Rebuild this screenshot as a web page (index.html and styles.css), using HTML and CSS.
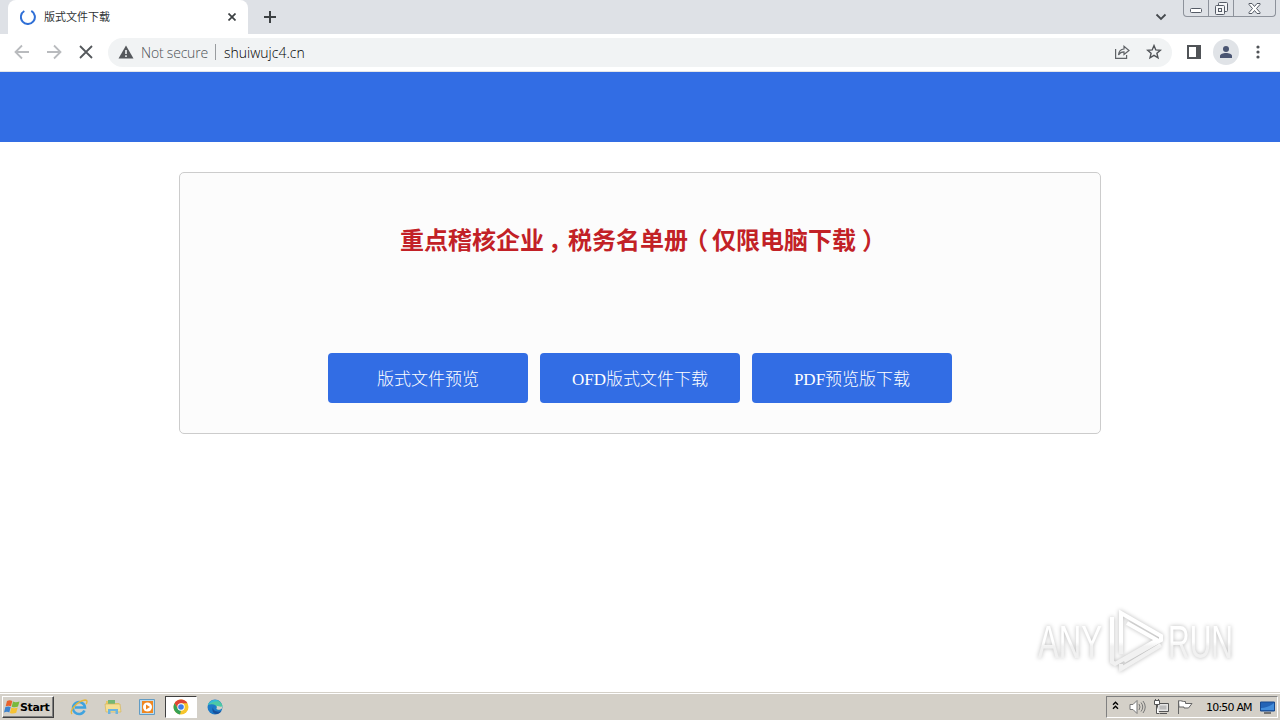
FILE: index.html
```html
<!DOCTYPE html>
<html lang="zh-CN">

<head>
    <meta charset="UTF-8">
    <meta name="viewport" content="width=device-width, initial-scale=1.0">
    <title>版式文件下载</title>
    <link rel="stylesheet" href="styles.css">
</head>

<body>
    <!-- Tabs -->
    <div class="tab-strip">
        <div class="tab">
            <svg class="spinner" width="16" height="16" viewBox="0 0 16 16"><path d="M11.3 1.9A7 7 0 1 1 4.3 2" fill="none" stroke="#2f6fd6" stroke-width="2"/></svg>
            <span class="tab-title">版式文件下载</span>
            <svg class="tab-close" width="8" height="8" viewBox="0 0 8 8"><path d="M.5 .5l7 7M7.5 .5l-7 7" stroke="#3c4043" stroke-width="1.7"/></svg>
        </div>
        <svg class="new-tab" width="12" height="12" viewBox="0 0 12 12"><path d="M6 0v12M0 6h12" stroke="#3c4043" stroke-width="2"/></svg>
        <svg class="tab-search" width="12" height="8" viewBox="0 0 12 8"><path d="M1.5 1.5L6 6l4.500-4.500" fill="none" stroke="#45494e" stroke-width="1.8"/></svg>
        <div class="window-buttons">
            <span class="win-btn win-min"><svg width="12" height="5" viewBox="0 0 12 5"><rect x=".5" y=".5" width="11" height="4" rx="1" fill="#fff" stroke="#555b66"/></svg></span>
            <span class="win-btn win-max"><svg width="13" height="13" viewBox="0 0 13 13"><g fill="#f4f5f7" stroke="#555b66"><rect x="3.500" y=".5" width="9" height="9" rx="1"/><rect x=".5" y="3.500" width="9" height="9" rx="1"/><rect x="3.500" y="6.500" width="3" height="3"/></g></svg></span>
            <span class="win-btn win-close"><svg width="13" height="11" viewBox="0 0 13 11"><path d="M1 .5h3l2.500 3 2.500-3h3v1L8.500 5.500l3.500 4v1H9l-2.500-3-2.500 3H1v-1l3.500-4L1 1.500z" fill="#fff" stroke="#555b66"/></svg></span>
        </div>
    </div>

    <!-- Toolbar -->
    <div class="toolbar">
        <svg class="nav-icon" width="16" height="16" viewBox="0 0 16 16"><path d="M15 8H2M8 1.500L1.500 8 8 14.500" fill="none" stroke="#b9bbbe" stroke-width="1.800"/></svg>
        <svg class="nav-icon" width="16" height="16" viewBox="0 0 16 16"><path d="M1 8h13M8 1.500L14.500 8 8 14.500" fill="none" stroke="#b9bbbe" stroke-width="1.800"/></svg>
        <svg class="nav-icon" width="16" height="16" viewBox="0 0 16 16"><path d="M2 2l12 12M14 2L2 14" stroke="#55585c" stroke-width="1.800"/></svg>
        <div class="address-bar">
            <svg width="16" height="14" viewBox="0 0 16 14"><path d="M8 .5L15.500 13.500H.5z" fill="#55585c"/><path d="M8 5v4M8 10.300v1.700" stroke="#f1f3f4" stroke-width="1.600"/></svg>
            <span class="not-secure">Not secure</span>
            <span class="separator"></span>
            <span class="url">shuiwujc4.cn</span>
            <svg class="share" width="16" height="16" viewBox="0 0 16 16"><g fill="none" stroke="#606367" stroke-width="1.200"><path d="M1.600 5v9.400h11V11"/><path d="M4.500 11c.4-4 2.500-5.800 5.500-6V2.200L15 6.500l-5 4V7.900c-2.500 0-4.200.9-5.500 3.100z"/></g></svg>
            <svg class="star" width="16" height="16" viewBox="0 0 16 16"><path d="M8 1.600l1.800 4.300 4.600.4-3.500 3 1.100 4.500L8 11.400l-4 2.400 1.100-4.500-3.500-3 4.600-.4z" fill="none" stroke="#505357" stroke-width="1.400"/></svg>
        </div>
        <svg class="side-panel" width="14" height="14" viewBox="0 0 14 14"><rect x="1" y="1" width="12" height="12" fill="none" stroke="#505357" stroke-width="2"/><path d="M9 1h4v12H9z" fill="#505357"/></svg>
        <span class="avatar"><svg width="12" height="12" viewBox="0 0 12 12"><circle cx="6" cy="3" r="3" fill="#4a5572"/><path d="M0 12V10c0-2 3-3 6-3s6 1 6 3v2z" fill="#4a5572"/></svg></span>
        <svg class="menu" width="4" height="14" viewBox="0 0 4 14"><g fill="#505357"><circle cx="2" cy="2" r="1.600"/><circle cx="2" cy="7" r="1.600"/><circle cx="2" cy="12" r="1.600"/></g></svg>
    </div>

    <!-- Page -->
    <div class="page">
        <div class="header"></div>
        <div class="container">
            <h1>重点稽核企业<span class="comma">，</span>税务名单册<span class="paren-open">（</span>仅限电脑下载<span class="paren-close">）</span></h1>
            <div class="buttons">
                <a class="btn">版式文件预览</a>
                <a class="btn"><span class="latin">OFD</span>版式文件下载</a>
                <a class="btn"><span class="latin">PDF</span>预览版下载</a>
            </div>
        </div>
        <svg class="watermark" width="240" height="76" viewBox="0 0 240 76">
            <defs>
                <linearGradient id="fade" gradientUnits="userSpaceOnUse" x1="0" y1="0" x2="0" y2="76">
                    <stop offset=".5" stop-color="#fff"/>
                    <stop offset=".56" stop-color="#f1f1f1"/>
                </linearGradient>
            </defs>
            <g class="mark-text" fill="url(#fade)">
                <text x="8" y="54" textLength="64" lengthAdjust="spacingAndGlyphs">ANY</text>
                <text x="138" y="54" textLength="65" lengthAdjust="spacingAndGlyphs">RUN</text>
            </g>
            <g class="mark-logo" stroke="url(#fade)">
                <path d="M82 13v45l3 2 42-24-30-17"/>
                <path d="M91 50V9l40 23v4L94 57"/>
                <path d="M91 60v5l40-24"/>
            </g>
        </svg>
    </div>

    <!-- Taskbar -->
    <div class="taskbar">
        <div class="start">
            <svg width="16" height="16" viewBox="0 0 16 16"><path d="M3 2c2-1 3.500-.9 5.300 0L7 7.300c-1.500-.9-3.300-.9-5.300 0z" fill="#e8622c"/><path d="M9 2.600c2 .9 4 .8 6.500-.2l-1.500 5.200c-2 .9-4.200 1-6.300.1z" fill="#79b93c"/><path d="M1.400 8.100c2-.9 3.700-.9 5.300 0l-1.400 5.300c-1.500-.9-3.200-.9-5.300 0z" fill="#3d83ce"/><path d="M7.400 8.600c2 .9 4.200 .8 6.300-.1L12.200 13.800c-2 .9-4.200 1-6.300.1z" fill="#f6c233"/></svg>
            <span>Start</span>
        </div>
        <div class="task-item">
            <svg width="18" height="18" viewBox="0 0 18 18"><path d="M14.500 12.500A6 6 0 1 1 15 9.500H5" fill="none" stroke="#3fa3df" stroke-width="2.500"/><path d="M2 16C-1 13 7 3 15 2c3 0 2 3 1 4" fill="none" stroke="#e5b73b" stroke-width="1.300"/></svg>
        </div>
        <div class="task-item">
            <svg width="18" height="18" viewBox="0 0 18 18"><path d="M2 3h5l1 2h7v9H2z" fill="#e9c765"/><path d="M4 2h7v5H4z" fill="#74b774"/><path d="M1 6h15l1 8H2z" fill="#f5df94" stroke="#d2b45e" stroke-width=".7"/><path d="M4 16v-5h10v5h-2.500v-3h-5v3z" fill="#6cb4df"/></svg>
        </div>
        <div class="task-item">
            <svg width="18" height="18" viewBox="0 0 18 18"><path d="M1.500 1.500h15v15h-15z" fill="#bcdcef" stroke="#629cc4"/><path d="M4 3h11v12H4z" fill="#ef8721"/><circle cx="9.500" cy="9" r="4.500" fill="#fff"/><path d="M8 6.500l4 2.500-4 2.500z" fill="#ef8721"/></svg>
        </div>
        <div class="task-item active">
            <svg width="16" height="16" viewBox="0 0 16 16"><circle cx="8" cy="8" r="7.500" fill="#f7c52b"/><path d="M1.500 4.300A7.500 7.500 0 0 1 14.500 4.300H8L5 9.700z" fill="#df4535"/><path d="M1.500 4.300L5 9.700 8 11.400l-1 4A7.500 7.500 0 0 1 1.500 4.300z" fill="#36a155"/><circle cx="8" cy="8" r="3.700" fill="#fff"/><circle cx="8" cy="8" r="2.800" fill="#3f7de8"/></svg>
        </div>
        <div class="task-item">
            <svg width="16" height="16" viewBox="0 0 16 16"><circle cx="8" cy="8" r="7.500" fill="#1d7ac8"/><path d="M.8 6C3 0 13-1.500 15.500 7c.2 3-3 4.500-6 3C11 7 7 4 .8 6z" fill="#4cc9a5"/><path d="M.8 6C3 1 9-.5 12.500 2.500 9 1.500 4 3 .8 6z" fill="#34b9dc"/><path d="M6.500 7c-2 4 3 7 8 5-4 6-12 2-8-5z" fill="#17509b"/><path d="M9.500 10c0-1 1-2 0-3.200 2 .2 5 2 6 .2 0 4-4 4.500-6 3z" fill="#d4d0c8"/></svg>
        </div>
        <div class="tray">
            <svg class="tray-up" width="7" height="9" viewBox="0 0 7 9"><path d="M1 3.700L3.500 1.200 6 3.700M1 7.700l2.500-2.500L6 7.700" fill="none" stroke="#000" stroke-width="1.400"/></svg>
            <svg class="tray-sound" width="17" height="16" viewBox="0 0 17 16"><path d="M1 5.500h3l4-4v13l-4-4H1z" fill="#fff" stroke="#777"/><path d="M10 5q2 3 0 6M12 3.500q3.500 4.500 0 9M14 2q4.500 6 0 12" fill="none" stroke="#777"/></svg>
            <svg class="tray-net" width="17" height="16" viewBox="0 0 17 16"><path d="M4.500 4.500h11v8h-11zM7 14.500h7" fill="#e4e4e4" stroke="#555"/><path d="M6.500 6.500h7v4h-7z" fill="#bbb"/><path d="M1.500 1.500h5v4h-5zM2.500 0v1M5.500 0v1M3.500 6v8.500h3" fill="#fff" stroke="#555"/></svg>
            <svg class="tray-flag" width="17" height="16" viewBox="0 0 17 16"><path d="M1.500 15V1.500M1.500 2c3-1 4 1 7 .5v2h6.500l-3.500 4.500H7V8H2z" fill="#fff" stroke="#666"/></svg>
            <span class="clock">10:50 AM</span>
            <svg class="tray-desktop" width="15" height="13" viewBox="0 0 15 13"><path d="M.5 1h14v9H.5z" fill="#2464b6" stroke="#17498d"/><path d="M1 7Q8 7 14 2v7H1z" fill="#438dda"/><path d="M4 12h7" stroke="#555" stroke-width="1.500"/></svg>
        </div>
    </div>
</body>

</html>
```
FILE: styles.css
```css
* {
    box-sizing: border-box;
}
body {
    margin: 0;
    width: 1280px;
    height: 720px;
    display: flex;
    flex-direction: column;
    overflow: hidden;
    background-color: #fff;
    font-family: "Noto Sans", "Noto Sans CJK SC", sans-serif;
}
svg {
    display: block;
    flex: none;
}

/* Tabs */
.tab-strip {
    height: 34px;
    flex: none;
    display: flex;
    align-items: flex-start;
    background-color: #dee1e6;
    padding-left: 8px;
}
.tab {
    width: 240px;
    height: 34px;
    display: flex;
    align-items: center;
    padding: 0 12px;
    background-color: #fff;
    border-radius: 8px 8px 0 0;
}
.tab-title {
    flex: 1;
    margin-left: 8px;
    padding-bottom: 2px;
    font-family: "Noto Sans CJK SC", sans-serif;
    font-size: 11px;
    line-height: 16px;
    color: #303336;
}
.new-tab {
    margin: 11px 0 0 16px;
}
.tab-search {
    margin: 13px 16px 0 auto;
}
.window-buttons {
    display: flex;
    width: 93px;
    height: 17px;
    margin-right: 4px;
    border: 1px solid #8d929b;
    border-top: none;
    border-radius: 0 0 4px 4px;
}
.win-btn {
    display: flex;
    justify-content: center;
    align-items: center;
    width: 25px;
    border-right: 1px solid #8d929b;
}
.win-min {
    padding-top: 5px;
}
.win-close {
    width: 41px;
    border-right: none;
}

/* Toolbar */
.toolbar {
    height: 38px;
    flex: none;
    display: flex;
    align-items: center;
    padding: 0 0 1px 14px;
    border-bottom: 1px solid #e3e5e8;
}
.nav-icon {
    margin-right: 16px;
}
.address-bar {
    width: 1064px;
    height: 29px;
    margin-left: -2px;
    padding: 0 10px;
    display: flex;
    align-items: center;
    background-color: #f1f3f4;
    border-radius: 15px;
    font-family: "Open Sans", sans-serif;
    font-size: 14px;
    font-weight: 300;
}
.not-secure {
    width: 67px;
    margin-left: 7px;
    letter-spacing: -0.2px;
    color: #4e5256;
    white-space: nowrap;
}
.separator {
    width: 1px;
    height: 16px;
    margin: 0 8px 0 7px;
    background-color: #999c9f;
}
.url {
    color: #000;
}
.share {
    margin-left: auto;
}
.star {
    margin-left: 16px;
}
.side-panel {
    margin-left: 15px;
}
.avatar {
    width: 26px;
    height: 26px;
    margin-left: 12px;
    display: flex;
    justify-content: center;
    align-items: center;
    border-radius: 50%;
    background-color: #e0e3e7;
}
.menu {
    margin-left: 17px;
}

/* Page */
.page {
    position: relative;
    flex: 1;
}
.header {
    height: 70px;
    background-color: #326de4;
}
.container {
    width: 922px;
    height: 262px;
    margin: 30px auto 0;
    padding-top: 48px;
    background-color: #fcfcfc;
    border: 1px solid #ccc;
    border-radius: 5px;
}
h1 {
    height: 36px;
    margin: 0 0 96px;
    font-family: "Noto Sans CJK SC", sans-serif;
    font-size: 24px;
    line-height: 36px;
    font-weight: bold;
    text-align: center;
    color: #c22126;
}
.comma {
    margin: 0 -4px 0 4px;
}
.paren-open {
    margin: 0 4px 0 -4px;
}
.paren-close {
    margin: 0 -6px 0 6px;
}
.buttons {
    display: flex;
    justify-content: center;
    gap: 12px;
}
.btn {
    width: 200px;
    height: 50px;
    line-height: 49px;
    text-align: center;
    font-family: "Noto Sans CJK SC", sans-serif;
    font-size: 17px;
    font-weight: 300;
    color: #fff;
    background-color: #326de4;
    border-radius: 4px;
}
.latin {
    font-family: "Liberation Serif", serif;
}
.watermark {
    position: absolute;
    left: 1030px;
    top: 532px;
    filter: drop-shadow(0 0 2px rgba(0, 0, 0, 0.28));
}
.mark-text {
    font-family: "Liberation Sans", sans-serif;
    font-size: 47px;
}
.mark-logo {
    fill: none;
    stroke-width: 4px;
}

/* Taskbar */
.taskbar {
    height: 28px;
    flex: none;
    display: flex;
    align-items: center;
    padding: 1px 2px 0;
    background-color: #d4d0c8;
    border-top: 1px solid #d4d0c8;
    box-shadow: inset 0 1px #fff;
}
.start {
    width: 52px;
    height: 22px;
    margin-right: 9px;
    padding-left: 1px;
    display: flex;
    align-items: center;
    border: 1px solid;
    border-color: #fff #404040 #404040 #fff;
    box-shadow: inset -1px -1px #808080;
    font-family: "DejaVu Sans", sans-serif;
    font-size: 11px;
    font-weight: bold;
    letter-spacing: -0.4px;
}
.task-item {
    width: 32px;
    height: 22px;
    margin-right: 2px;
    display: flex;
    justify-content: center;
    align-items: center;
}
.task-item.active {
    background-color: #fff;
    border: 1px solid;
    border-color: #404040 #fff #fff #404040;
}
.tray {
    width: 172px;
    height: 22px;
    margin-left: auto;
    padding-left: 5px;
    display: flex;
    align-items: center;
    border: 1px solid;
    border-color: #808080 #fff #fff #808080;
}
.tray-up {
    margin-bottom: 3px;
}
.tray-sound {
    margin-left: 10px;
}
.tray-net {
    margin-left: 7px;
}
.tray-flag {
    margin-left: 7px;
}
.clock {
    width: 47px;
    margin: 0 7px 0 12px;
    font-family: "DejaVu Sans", sans-serif;
    font-size: 11px;
    letter-spacing: -0.8px;
    white-space: nowrap;
}
```
